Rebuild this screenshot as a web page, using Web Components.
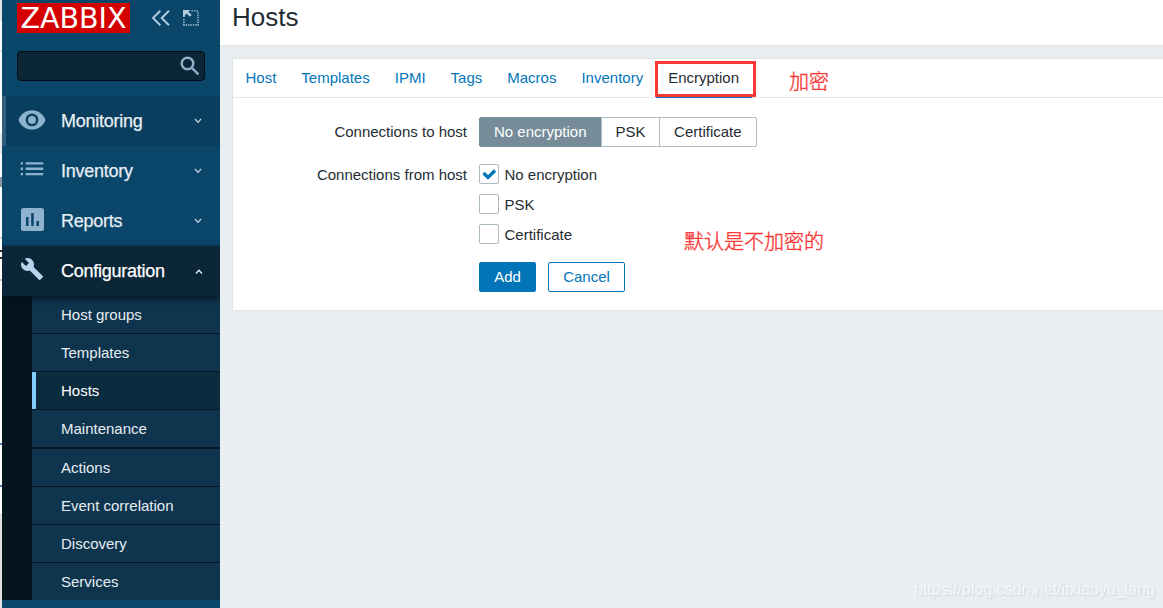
<!DOCTYPE html>
<html lang="en">
<head>
<meta charset="utf-8">
<title>Hosts</title>
<style>
html,body{margin:0;height:608px;overflow:hidden}
body{font:15px "Liberation Sans",Arial,sans-serif;color:#1f2c33;background:#e9eef1}
</style>
</head>
<body>
<zbx-app></zbx-app>
<script>
const define = (name, html, setup) => {
  const t = document.createElement('template');
  t.innerHTML = html;
  customElements.define(name, class extends HTMLElement {
    constructor() {
      super();
      this.attachShadow({mode: 'open'}).append(t.content.cloneNode(true));
    }
    connectedCallback() { if (setup) setup(this, this.shadowRoot); }
  });
};

define('zbx-icon', `<style>:host{display:block}svg{display:block}</style><span></span>`, (el, root) => {
  const icons = {
    collapse: '<svg width="20" height="18" viewBox="0 0 20 18" fill="none" stroke="#b3cde0" stroke-width="1.9"><path d="M9.3 1.8 2 9l7.3 7.2M18 1.8 10.7 9l7.3 7.2"/></svg>',
    kiosk: '<svg width="17" height="17" viewBox="0 0 17 17" fill="none" stroke="#b3cde0"><path stroke-width="1.4" stroke-dasharray="1.3 1.100" d="M8.500.9h7.200M15 2v14M.9 9v6.500M.3 15h15"/><path fill="#b3cde0" stroke="none" d="M0 0h7.200L5.500 1.800 8.600 5.100 7 6.700 3.700 3.600 1.800 5.500v1.600H0z"/></svg>',
    search: '<svg width="20" height="20" viewBox="0 0 20 20" fill="none" stroke="#8fb0c8" stroke-width="2.4"><circle cx="7.500" cy="7.500" r="5.800"/><path d="m11.500 11.500 6.900 6.900"/></svg>',
    eye: '<svg width="28" height="20" viewBox="0 0 28 20"><path fill="#8fb3cf" fill-rule="evenodd" d="M14 .3C7.700 .3 2.600 4.200.500 9.900 2.600 15.600 7.700 19.500 14 19.500s11.400-3.900 13.500-9.600C25.400 4.200 20.300.300 14 .300zm0 16a6.400 6.400 0 1 1 0-12.800 6.400 6.400 0 0 1 0 12.800zm0-2.500a3.900 3.900 0 1 0 0-7.800 3.900 3.900 0 0 0 0 7.800z"/></svg>',
    list: '<svg width="24" height="16" viewBox="0 0 24 16" fill="#8fb3cf"><path d="M.700.300H3V2.600H.700zM5.700.300H23.200V2.600H5.700zM.700 5.600H3v2.300H.700zM5.700 5.600H23.200v2.300H5.700zM.700 10.900H3v2.300H.700zM5.700 10.900H23.200v2.300H5.700z"/></svg>',
    chart: '<svg width="23" height="23" viewBox="0 0 23 23"><rect width="23" height="23" rx="2.500" fill="#8fb3cf"/><path fill="#0a466a" d="M5 9h2.500v9H5zM10.200 5h2.500v13h-2.500zM15.500 13H18v5h-2.500z"/></svg>',
    wrench: '<svg width="24" height="26" viewBox="0 0 24 26"><path fill="#b7d4ec" d="M22.700 19l-9.100-9.100c.9-2.300.4-5-1.500-6.900-2-2-5-2.400-7.400-1.300L9 6 6 9 1.600 4.700C.4 7.100.9 10.100 2.900 12.100c1.900 1.900 4.600 2.400 6.900 1.500l9.100 9.100c.4.4 1 .4 1.400 0l2.300-2.300c.5-.4.5-1.100.1-1.400z"/></svg>',
    down: '<svg width="8" height="6" viewBox="0 0 8 6" fill="none" stroke="#c8dce9" stroke-width="1.200"><path d="m1 1 3 3.300L7 1"/></svg>',
    up: '<svg width="8" height="6" viewBox="0 0 8 6" fill="none" stroke="#e5f1f8" stroke-width="1.300"><path d="m1 5.500 3-3.300L7 5.500"/></svg>'
  };
  root.querySelector('span').innerHTML = icons[el.getAttribute('name')];
});

define('zbx-nav-item', `<style>
:host{display:grid;grid-template-columns:59px 1fr 8px;align-items:center;height:50px;box-sizing:border-box;padding-right:18px;color:#e6eef3;font-size:18px;letter-spacing:-.26px}
:host([hovered]){background:#093e5e;box-shadow:inset 4px 0 #305f7b}
:host([open]){background:#0a2637;color:#fff;box-shadow:0 2px 6px #04121a;position:relative;padding-right:17px}
.i{display:grid;width:60px;justify-content:center;align-items:center}
.i zbx-icon{margin-top:-3px}
.label{-webkit-text-stroke:.25px}
</style><div class="i"><zbx-icon id="ic"></zbx-icon></div><span class="label"><slot></slot></span><zbx-icon id="ar"></zbx-icon>`, (el, root) => {
  const set = (id, name) => { const n = document.createElement('zbx-icon'); n.setAttribute('name', name); root.getElementById(id).replaceWith(n); };
  set('ic', el.getAttribute('icon'));
  set('ar', el.hasAttribute('open') ? 'up' : 'down');
});

define('zbx-sub-item', `<style>
:host{display:flex;align-items:center;box-sizing:border-box;height:38px;padding-left:29px;background:#0f344d;border-bottom:1px solid #051822;color:#e6edf2;font-size:15px}
:host([last]){border-bottom:0;height:37px}
:host([thick]){height:39px;border-bottom-width:2px}
:host([selected]){background:#0b2b3f;box-shadow:inset 4px 0 #84ceff;color:#fff}
</style><slot></slot>`);

define('zbx-sidebar', `<style>
:host{display:flex;flex-direction:column;width:218px;height:608px;background:#0a466a;overflow:hidden}
.top{display:flex;height:51px;box-sizing:border-box;padding:3px 0 0 15px;align-items:flex-start}
.logo{width:113px;height:30px;background:#d40000;color:#fff;font:28.500px/31px "DejaVu Sans",sans-serif;display:flex;justify-content:center}
.c{margin:6px 0 0 21px}.k{margin:7px 0 0 12px}
.search{display:flex;justify-content:flex-end;align-items:center;box-sizing:border-box;width:188px;height:30px;margin:0 0 15px 15px;padding-right:4px;background:#0a2637;border:1px solid #020c13;border-radius:4px}
.sub{background:#04151e;padding-left:30px;margin-bottom:8px;height:304px;box-sizing:border-box}
</style>
<div class="top"><div class="logo"><span>ZABBIX</span></div><zbx-icon class="c" name="collapse"></zbx-icon><zbx-icon class="k" name="kiosk"></zbx-icon></div>
<div class="search"><zbx-icon name="search"></zbx-icon></div>
<zbx-nav-item icon="eye" hovered>Monitoring</zbx-nav-item>
<zbx-nav-item icon="list">Inventory</zbx-nav-item>
<zbx-nav-item icon="chart">Reports</zbx-nav-item>
<zbx-nav-item icon="wrench" open>Configuration</zbx-nav-item>
<div class="sub">
<zbx-sub-item>Host groups</zbx-sub-item><zbx-sub-item>Templates</zbx-sub-item><zbx-sub-item selected>Hosts</zbx-sub-item><zbx-sub-item thick>Maintenance</zbx-sub-item><zbx-sub-item>Actions</zbx-sub-item><zbx-sub-item>Event correlation</zbx-sub-item><zbx-sub-item>Discovery</zbx-sub-item><zbx-sub-item last>Services</zbx-sub-item>
</div>`);

define('zbx-tab', `<style>
:host{display:flex;align-items:center;box-sizing:border-box;height:39px;padding:0 12.500px 2px;color:#0275b8}
:host([active]){color:#1f2c33;box-shadow:inset 0 -3px #0275b8}
</style><slot></slot>`);

define('zbx-segment', `<style>
:host{display:flex;align-items:center;box-sizing:border-box;height:30px;border:1px solid #acbbc2;padding:0 14px 1px;margin-left:-1px}
:host(:first-child){border-radius:2px 0 0 2px;margin:0;padding-right:14.500px}
:host(:nth-child(2)){padding:0 13.500px 1px}
:host(:last-child){border-radius:0 2px 2px 0;padding-right:14.200px}
:host([on]){background:#768d99;border-color:#768d99;color:#fff}
</style><slot></slot>`);

define('zbx-check', `<style>
:host{display:flex;align-items:center;height:20px}
.b{box-sizing:border-box;width:20px;height:20px;border:1px solid #acbbc2;border-radius:2px;margin-right:5.500px;background:#fff}
svg{display:none}:host([checked]) svg{display:block}
</style><div class="b"><svg width="18" height="18" viewBox="0 0 18 18" fill="none" stroke="#0275b8" stroke-width="3.200"><path d="m3.500 8 4.500 4.500 7-7"/></svg></div><span class="t"><slot></slot></span>`);

define('zbx-button', `<style>
:host{display:flex;align-items:center;justify-content:center;box-sizing:border-box;height:30px;padding-bottom:1px;border:1px solid #0275b8;border-radius:2px;color:#0275b8;background:#fff}
:host([primary]){background:#0275b8;color:#fff}
</style><slot></slot>`);

define('zbx-note', `<style>
:host{position:absolute;white-space:nowrap;color:#f93836;font:300 20px/28px "Noto Sans CJK SC",sans-serif;-webkit-text-stroke:.4px}
:host([frame]){border:3px solid #f93836;box-sizing:border-box}
:host([watermark]){font:16px/20px "Liberation Sans",sans-serif;color:#f5f7f9;text-shadow:1px 1px 1px #d0d5d9;-webkit-text-stroke:0}
</style><slot></slot>`);

define('zbx-form', `<style>
:host{display:block;box-sizing:border-box;height:253px;margin:12px 0 0 12px;background:#fff;border:1px solid #dfe4e7;border-right:0}
.tabs{display:flex;height:39px;box-sizing:border-box;box-shadow:inset 0 -1px #e5e9ec}
.grid{display:grid;grid-template-columns:234px 1fr;column-gap:12px;padding-top:19px}
.l{text-align:right;line-height:30px}
.seg,.btns{display:flex}
.l2{line-height:20px;padding-top:18px}
.checks{display:flex;flex-direction:column;gap:10px;padding-top:17px}
.btns{grid-column:2;gap:12px;margin-top:18px}
</style>
<div class="tabs"><zbx-tab>Host</zbx-tab><zbx-tab>Templates</zbx-tab><zbx-tab>IPMI</zbx-tab><zbx-tab>Tags</zbx-tab><zbx-tab>Macros</zbx-tab><zbx-tab>Inventory</zbx-tab><zbx-tab active>Encryption</zbx-tab></div>
<div class="grid">
<div class="l">Connections to host</div>
<div class="seg"><zbx-segment on>No encryption</zbx-segment><zbx-segment>PSK</zbx-segment><zbx-segment>Certificate</zbx-segment></div>
<div class="l l2">Connections from host</div>
<div class="checks"><zbx-check checked>No encryption</zbx-check><zbx-check>PSK</zbx-check><zbx-check>Certificate</zbx-check></div>
<div class="btns"><zbx-button primary style="width:57px">Add</zbx-button><zbx-button style="width:77px">Cancel</zbx-button></div>
</div>`);

define('zbx-app', `<style>
:host{display:flex;position:relative;width:1163px;height:608px;overflow:hidden}
.edge{width:2px;background:linear-gradient(#dfe4e7 0 21px,#fff 21px 50px,#dfe4e7 50px 52px,#fff 52px 133px,#e5e9ec 133px 154px,#fff 154px 177px,#8797a5 177px 187px,#fff 187px 237px,#ccd3d8 237px 239px,#fff 239px 250px,#333 250px 252px,#fff 252px 257px,#333 257px 259px,#fff 259px 279px,#ccc 279px 281px,#fff 281px 443px,#5475a5 443px 445px,#fff 445px 485px,#5475a5 485px 487px,#fff 487px 513px,#e2e2e2 513px)}
main{flex:1}
header{height:46px;box-sizing:border-box;background:#fff;border-bottom:1px solid #dfe4e7;padding:0 12px;font-size:26px;line-height:34px}
</style>
<div class="edge"></div><zbx-sidebar></zbx-sidebar>
<main><header>Hosts</header><zbx-form></zbx-form></main>
<zbx-note frame style="left:655px;top:61px;width:101px;height:36px"></zbx-note>
<zbx-note style="left:789px;top:67px">加密</zbx-note>
<zbx-note style="left:684px;top:227px">默认是不加密的</zbx-note>
<zbx-note watermark style="left:914px;top:580px">https://blog.csdn.net/itxiaoyu_lang</zbx-note>`);
</script>
</body>
</html>
